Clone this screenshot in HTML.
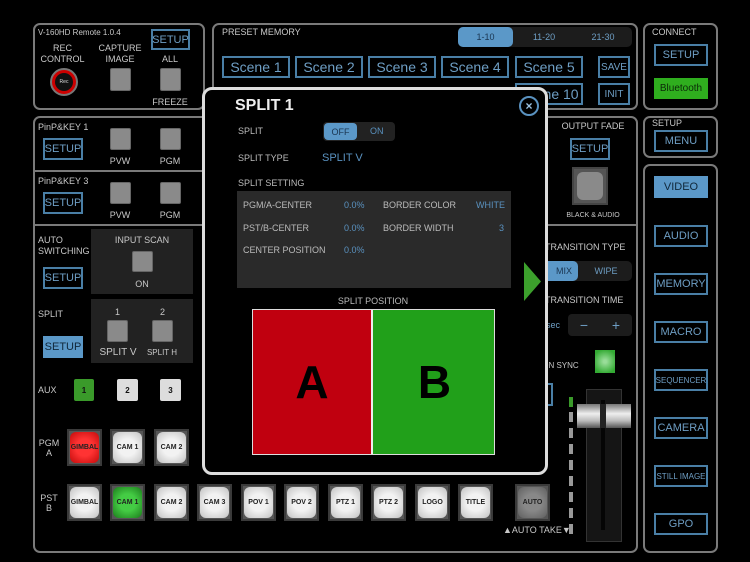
<!DOCTYPE html>
<html><head><meta charset="utf-8"><style>
*{box-sizing:border-box;margin:0;padding:0}
body{width:750px;height:562px;background:#000;position:relative;overflow:hidden;font-family:"Liberation Sans",sans-serif;color:#ccc}
.a{position:absolute}
.pn{position:absolute;border:2px solid #7a7a7a;border-radius:7px}
.t{position:absolute;font-size:9px;color:#c8c8c8;white-space:nowrap}
.c{text-align:center}
.bb{position:absolute;border:2px solid #4a7fa6;color:#6e9ec4;font-size:11px;display:flex;align-items:center;justify-content:center}
.fb{position:absolute;background:#5b98c8;color:#10273a;font-size:11px;display:flex;align-items:center;justify-content:center}
.gs{position:absolute;background:#8a8a8a;border-radius:2px;border:1px solid #666}
.sc{position:absolute;border:2px solid #4a7fa6;color:#6e9ec4;font-size:14px;display:flex;align-items:center;justify-content:center;height:22px;width:68px}
.kb{position:absolute;width:35px;height:37px;background:#555;border:2px solid #3a3a3a;display:flex;align-items:center;justify-content:center}
.kb span{width:29px;height:31px;border-radius:6px;background:radial-gradient(circle,#f2f2f2 40%,#c9c9c9 90%);font-size:7px;font-weight:bold;color:#222;display:flex;align-items:center;justify-content:center}
.ln{position:absolute;background:#7a7a7a;height:2px}
.mt{position:absolute;font-size:9px;color:#bbb;white-space:nowrap}
.mv{position:absolute;font-size:9px;color:#5a92c0;white-space:nowrap}
</style></head><body>

<!-- top left panel -->
<div class="pn" style="left:33px;top:23px;width:172px;height:87px"></div>
<div class="t" style="left:38px;top:28px;font-size:8px">V-160HD Remote 1.0.4</div>
<div class="bb" style="left:151px;top:29px;width:39px;height:21px">SETUP</div>
<div class="t c" style="left:40px;top:43px;width:45px;line-height:11px">REC<br>CONTROL</div>
<div class="a" style="left:50px;top:68px;width:28px;height:28px;border-radius:50%;background:#c00;border:2px solid #777"></div>
<div class="a" style="left:55px;top:73px;width:18px;height:18px;border-radius:50%;background:#111;color:#ddd;font-size:5px;display:flex;align-items:center;justify-content:center">Rec</div>
<div class="t c" style="left:95px;top:43px;width:50px;line-height:11px">CAPTURE<br>IMAGE</div>
<div class="gs" style="left:110px;top:68px;width:21px;height:23px"></div>
<div class="t c" style="left:155px;top:54px;width:30px">ALL</div>
<div class="gs" style="left:160px;top:68px;width:21px;height:23px"></div>
<div class="t c" style="left:150px;top:97px;width:40px">FREEZE</div>

<!-- preset memory -->
<div class="pn" style="left:212px;top:23px;width:426px;height:87px"></div>
<div class="t" style="left:222px;top:27px">PRESET MEMORY</div>
<div class="a" style="left:458px;top:27px;width:174px;height:20px;background:#1c1c1c;border-radius:5px"></div>
<div class="a" style="left:458px;top:27px;width:55px;height:20px;background:#5b98c8;border-radius:5px;color:#1a3550;font-size:9px;display:flex;align-items:center;justify-content:center">1-10</div>
<div class="t c" style="left:515px;top:32px;width:58px;color:#6e9ec4">11-20</div>
<div class="t c" style="left:574px;top:32px;width:58px;color:#6e9ec4">21-30</div>
<div class="sc" style="left:222px;top:56px">Scene 1</div>
<div class="sc" style="left:295px;top:56px">Scene 2</div>
<div class="sc" style="left:368px;top:56px">Scene 3</div>
<div class="sc" style="left:441px;top:56px">Scene 4</div>
<div class="sc" style="left:515px;top:56px">Scene 5</div>
<div class="sc" style="left:515px;top:83px">Scene 10</div>
<div class="bb" style="left:598px;top:56px;width:32px;height:22px;font-size:10px">SAVE</div>
<div class="bb" style="left:598px;top:83px;width:32px;height:22px;font-size:10px">INIT</div>

<!-- connect -->
<div class="pn" style="left:643px;top:23px;width:75px;height:87px"></div>
<div class="t" style="left:652px;top:27px">CONNECT</div>
<div class="bb" style="left:654px;top:44px;width:54px;height:22px">SETUP</div>
<div class="a" style="left:654px;top:78px;width:54px;height:21px;background:#2fae1e;color:#0b2a08;font-size:10px;display:flex;align-items:center;justify-content:center">Bluetooth</div>
<div class="pn" style="left:643px;top:116px;width:75px;height:42px"></div>
<div class="t" style="left:652px;top:118px">SETUP</div>
<div class="bb" style="left:654px;top:130px;width:54px;height:22px">MENU</div>
<div class="pn" style="left:643px;top:164px;width:75px;height:389px"></div>
<div class="fb" style="left:654px;top:176px;width:54px;height:22px">VIDEO</div>
<div class="bb" style="left:654px;top:225px;width:54px;height:22px">AUDIO</div>
<div class="bb" style="left:654px;top:273px;width:54px;height:22px">MEMORY</div>
<div class="bb" style="left:654px;top:321px;width:54px;height:22px">MACRO</div>
<div class="bb" style="left:654px;top:369px;width:54px;height:22px;font-size:8px">SEQUENCER</div>
<div class="bb" style="left:654px;top:417px;width:54px;height:22px">CAMERA</div>
<div class="bb" style="left:654px;top:465px;width:54px;height:22px;font-size:8px">STILL IMAGE</div>
<div class="bb" style="left:654px;top:513px;width:54px;height:22px">GPO</div>

<!-- main panel -->
<div class="pn" style="left:33px;top:116px;width:605px;height:437px"></div>
<div class="ln" style="left:33px;top:170px;width:172px"></div>
<div class="ln" style="left:33px;top:224px;width:172px"></div>
<div class="ln" style="left:548px;top:224px;width:90px"></div>
<div class="t" style="left:38px;top:122px">PinP&amp;KEY 1</div>
<div class="bb" style="left:43px;top:138px;width:40px;height:22px">SETUP</div>
<div class="gs" style="left:110px;top:128px;width:21px;height:22px"></div>
<div class="gs" style="left:160px;top:128px;width:21px;height:22px"></div>
<div class="t c" style="left:105px;top:156px;width:30px">PVW</div>
<div class="t c" style="left:155px;top:156px;width:30px">PGM</div>
<div class="t" style="left:38px;top:176px">PinP&amp;KEY 3</div>
<div class="bb" style="left:43px;top:192px;width:40px;height:22px">SETUP</div>
<div class="gs" style="left:110px;top:182px;width:21px;height:22px"></div>
<div class="gs" style="left:160px;top:182px;width:21px;height:22px"></div>
<div class="t c" style="left:105px;top:210px;width:30px">PVW</div>
<div class="t c" style="left:155px;top:210px;width:30px">PGM</div>
<div class="t" style="left:38px;top:235px;line-height:11px">AUTO<br>SWITCHING</div>
<div class="a" style="left:91px;top:229px;width:102px;height:65px;background:#222"></div>
<div class="t c" style="left:91px;top:235px;width:102px">INPUT SCAN</div>
<div class="gs" style="left:132px;top:251px;width:21px;height:21px"></div>
<div class="t c" style="left:91px;top:279px;width:102px">ON</div>
<div class="bb" style="left:43px;top:267px;width:40px;height:22px">SETUP</div>
<div class="t" style="left:38px;top:309px">SPLIT</div>
<div class="a" style="left:91px;top:299px;width:102px;height:64px;background:#222"></div>
<div class="t c" style="left:107px;top:307px;width:21px">1</div>
<div class="t c" style="left:152px;top:307px;width:21px">2</div>
<div class="gs" style="left:107px;top:320px;width:21px;height:22px"></div>
<div class="gs" style="left:152px;top:320px;width:21px;height:22px"></div>
<div class="t c" style="left:95px;top:347px;width:46px;font-size:10px">SPLIT V</div>
<div class="t c" style="left:142px;top:348px;width:40px;font-size:8px">SPLIT H</div>
<div class="fb" style="left:43px;top:336px;width:40px;height:22px">SETUP</div>
<div class="t" style="left:38px;top:385px">AUX</div>
<div class="a" style="left:74px;top:379px;width:20px;height:22px;background:#3a9a2a;border-radius:2px;font-size:8px;font-weight:bold;color:#111;display:flex;align-items:center;justify-content:center">1</div>
<div class="a" style="left:117px;top:379px;width:21px;height:22px;background:#ddd;border-radius:2px;font-size:8px;font-weight:bold;color:#111;display:flex;align-items:center;justify-content:center">2</div>
<div class="a" style="left:160px;top:379px;width:21px;height:22px;background:#ddd;border-radius:2px;font-size:8px;font-weight:bold;color:#111;display:flex;align-items:center;justify-content:center">3</div>
<div class="t c" style="left:38px;top:438px;width:22px;line-height:10px">PGM<br>A</div>
<div class="t c" style="left:38px;top:493px;width:22px;line-height:10px">PST<br>B</div>
<div class="kb" style="left:67px;top:429px"><span style="background:radial-gradient(circle,#f33 40%,#c11 90%)">GIMBAL</span></div>
<div class="kb" style="left:110px;top:429px"><span>CAM 1</span></div>
<div class="kb" style="left:154px;top:429px"><span>CAM 2</span></div>
<div class="kb" style="left:67px;top:484px"><span>GIMBAL</span></div>
<div class="kb" style="left:110px;top:484px"><span style="background:radial-gradient(circle,#4c4 40%,#282 90%)">CAM 1</span></div>
<div class="kb" style="left:154px;top:484px"><span>CAM 2</span></div>
<div class="kb" style="left:197px;top:484px"><span>CAM 3</span></div>
<div class="kb" style="left:241px;top:484px"><span>POV 1</span></div>
<div class="kb" style="left:284px;top:484px"><span>POV 2</span></div>
<div class="kb" style="left:328px;top:484px"><span>PTZ 1</span></div>
<div class="kb" style="left:371px;top:484px"><span>PTZ 2</span></div>
<div class="kb" style="left:415px;top:484px"><span>LOGO</span></div>
<div class="kb" style="left:458px;top:484px"><span>TITLE</span></div>
<div class="kb" style="left:515px;top:484px"><span style="background:radial-gradient(circle,#888 40%,#666 90%)">AUTO</span></div>
<div class="t" style="left:503px;top:525px">▲AUTO TAKE▼</div>

<!-- right column -->
<div class="t c" style="left:548px;top:121px;width:90px">OUTPUT FADE</div>
<div class="bb" style="left:570px;top:138px;width:40px;height:22px">SETUP</div>
<div class="a" style="left:572px;top:167px;width:36px;height:38px;background:#555;border:2px solid #444"><div style="margin:3px;width:26px;height:28px;border-radius:6px;background:#8a8a8a"></div></div>
<div class="t c" style="left:548px;top:212px;width:90px;font-size:7px">BLACK &amp; AUDIO</div>
<div class="t" style="left:545px;top:242px">TRANSITION TYPE</div>
<div class="a" style="left:530px;top:261px;width:102px;height:20px;background:#1c1c1c;border-radius:5px"></div>
<div class="a" style="left:530px;top:261px;width:48px;height:20px;background:#5b98c8;border-radius:5px;color:#1a3550;font-size:9px;display:flex;align-items:center;justify-content:center;padding-left:20px">MIX</div>
<div class="t c" style="left:580px;top:266px;width:52px;color:#6e9ec4">WIPE</div>
<div class="t" style="left:545px;top:295px">TRANSITION TIME</div>
<div class="t" style="left:546px;top:320px;color:#6e9ec4">sec</div>
<div class="a" style="left:568px;top:314px;width:64px;height:22px;background:#1c1c1c;border-radius:4px;color:#6e9ec4;font-size:14px;display:flex;justify-content:space-around;align-items:center"><span>−</span><span>+</span></div>
<div class="t" style="left:540px;top:361px;font-size:8px">ION SYNC</div>
<div class="a" style="left:595px;top:350px;width:20px;height:23px;background:radial-gradient(circle,#9d9 10%,#3a3 80%)"></div>
<div class="a" style="left:540px;top:383px;width:13px;height:23px;border:2px solid #4a7fa6;border-left:none"></div>
<div class="a" style="left:586px;top:389px;width:36px;height:153px;background:#151515;border:1px solid #333"></div>
<div class="a" style="left:601px;top:400px;width:4px;height:130px;background:#050505"></div>
<div class="a" style="left:577px;top:404px;width:54px;height:24px;background:linear-gradient(#777,#eee 40%,#bbb 70%,#555)"></div>
<div class="a" style="left:600px;top:404px;width:6px;height:24px;background:#222"></div>
<div class="a" style="left:569px;top:397px;width:4px;height:10px;background:#3a9a2a"></div>
<div class="a" style="left:569px;top:412px;width:4px;height:125px;background:repeating-linear-gradient(#999 0 10px,#000 10px 16px)"></div>

<!-- modal -->
<div class="a" style="left:202px;top:87px;width:346px;height:388px;background:#000;border:3px solid #ddd;border-radius:10px"></div>
<div class="a" style="left:235px;top:97px;font-size:16px;font-weight:bold;color:#eee">SPLIT 1</div>
<div class="a" style="left:519px;top:96px;width:20px;height:20px;border-radius:50%;border:2px solid #5a92c0;color:#9cc4e4;font-size:12px;font-weight:bold;display:flex;align-items:center;justify-content:center">×</div>
<div class="mt" style="left:238px;top:126px">SPLIT</div>
<div class="a" style="left:323px;top:122px;width:72px;height:19px;background:#222;border-radius:4px"></div>
<div class="a" style="left:324px;top:123px;width:33px;height:17px;background:#5b98c8;border-radius:4px;color:#1a3550;font-size:9px;display:flex;align-items:center;justify-content:center">OFF</div>
<div class="mv" style="left:370px;top:126px">ON</div>
<div class="mt" style="left:238px;top:153px">SPLIT TYPE</div>
<div class="mv" style="left:322px;top:152px;font-size:11px">SPLIT V</div>
<div class="mt" style="left:238px;top:178px">SPLIT SETTING</div>
<div class="a" style="left:237px;top:191px;width:274px;height:97px;background:#2a2a2a"></div>
<div class="mt" style="left:243px;top:200px">PGM/A-CENTER</div>
<div class="mv" style="left:344px;top:200px">0.0%</div>
<div class="mt" style="left:383px;top:200px">BORDER COLOR</div>
<div class="mv" style="left:476px;top:200px">WHITE</div>
<div class="mt" style="left:243px;top:223px">PST/B-CENTER</div>
<div class="mv" style="left:344px;top:223px">0.0%</div>
<div class="mt" style="left:383px;top:223px">BORDER WIDTH</div>
<div class="mv" style="left:499px;top:223px">3</div>
<div class="mt" style="left:243px;top:245px">CENTER POSITION</div>
<div class="mv" style="left:344px;top:245px">0.0%</div>
<div class="mt c" style="left:323px;top:296px;width:100px">SPLIT POSITION</div>
<div class="a" style="left:252px;top:309px;width:243px;height:146px;border:1px solid #ddd;background:#21a01a"></div>
<div class="a" style="left:253px;top:310px;width:120px;height:144px;background:#c0000f;border-right:2px solid #eee;display:flex;align-items:center;justify-content:center;font-size:46px;font-weight:bold;color:#000">A</div>
<div class="a" style="left:375px;top:310px;width:119px;height:144px;display:flex;align-items:center;justify-content:center;font-size:46px;font-weight:bold;color:#000">B</div>
<svg class="a" style="left:524px;top:262px" width="18" height="39"><polygon points="0,0 17,19.5 0,39" fill="#3ca02c"/></svg>
</body></html>
